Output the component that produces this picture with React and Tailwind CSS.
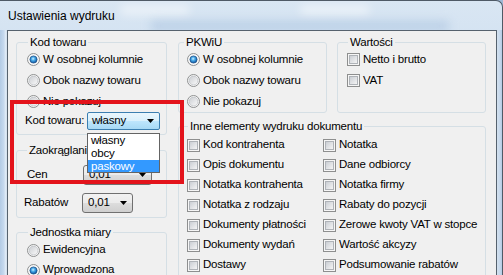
import React from "react";

function Radio({ checked }) {
  return (
    <svg width="13" height="13" viewBox="0 0 13 13" className="shrink-0">
      <defs>
        <linearGradient id="rgu" x1="0" y1="0" x2="1" y2="1">
          <stop offset="0" stopColor="#c9ccd1" />
          <stop offset="1" stopColor="#fbfbfb" />
        </linearGradient>
        <radialGradient id="rgc" cx="0.45" cy="0.4" r="0.65">
          <stop offset="0" stopColor="#d6f1ff" />
          <stop offset="0.35" stopColor="#4fb0ec" />
          <stop offset="0.8" stopColor="#1766b0" />
          <stop offset="1" stopColor="#0d3f75" />
        </radialGradient>
      </defs>
      <circle cx="6.5" cy="6.5" r="6" fill="#f7f7f7" stroke="#8e9091" strokeWidth="1" />
      {checked ? (
        <circle cx="6.5" cy="6.5" r="3.6" fill="url(#rgc)" stroke="#1b4f86" strokeWidth="0.7" />
      ) : (
        <circle cx="6.5" cy="6.5" r="4.4" fill="url(#rgu)" stroke="#b3b7bc" strokeWidth="0.6" />
      )}
    </svg>
  );
}

function Check() {
  return (
    <svg width="13" height="13" viewBox="0 0 13 13" className="shrink-0">
      <defs>
        <linearGradient id="cbg" x1="0" y1="0" x2="1" y2="1">
          <stop offset="0" stopColor="#c8ccd2" />
          <stop offset="1" stopColor="#f7f7f7" />
        </linearGradient>
      </defs>
      <rect x="0.5" y="0.5" width="12" height="12" fill="#f6f6f6" stroke="#8e8f8f" />
      <rect x="2.5" y="2.5" width="8" height="8" fill="url(#cbg)" stroke="#afb3b8" />
    </svg>
  );
}

function Arrow() {
  return (
    <svg width="7" height="4" viewBox="0 0 7 4" className="shrink-0">
      <path d="M0 0H7L3.5 4Z" fill="#000" />
    </svg>
  );
}

function Group({ title, ml, className = "", children }) {
  return (
    <fieldset className={`border border-[#d5dfe5] rounded-[3px] min-w-0 ${className}`}>
      <legend className={`px-[2px] h-[14px] leading-[14px] ${ml}`}>{title}</legend>
      {children}
    </fieldset>
  );
}

function RadioRow({ label, checked, h = "h-[21px]" }) {
  return (
    <div className={`flex items-center gap-[3px] ${h}`}>
      <Radio checked={checked} />
      <span className="whitespace-nowrap">{label}</span>
    </div>
  );
}

function CheckRow({ label, h = "h-[20px]" }) {
  return (
    <div className={`flex items-center gap-[3px] ${h}`}>
      <Check />
      <span className="whitespace-nowrap">{label}</span>
    </div>
  );
}

function GrayCombo({ value, w }) {
  return (
    <div
      className={`flex items-center justify-between h-[20px] ${w} border border-[#707070] rounded-[3px] pl-[5px] pr-[5px] bg-[linear-gradient(180deg,#f2f2f2_0%,#ebebeb_50%,#dddddd_51%,#cfcfcf_100%)]`}
    >
      <span>{value}</span>
      <Arrow />
    </div>
  );
}

const others = [
  ["Kod kontrahenta", "Notatka"],
  ["Opis dokumentu", "Dane odbiorcy"],
  ["Notatka kontrahenta", "Notatka firmy"],
  ["Notatka z rodzaju", "Rabaty do pozycji"],
  ["Dokumenty płatności", "Zerowe kwoty VAT w stopce"],
  ["Dokumenty wydań", "Wartość akcyzy"],
  ["Dostawy", "Podsumowanie rabatów"],
];

export default function App() {
  return (
    <div className="relative w-[503px] h-[275px] overflow-hidden bg-[#9fb9d6] font-['Liberation_Sans',Arial,sans-serif] text-[11.5px] tracking-[-0.2px] text-black leading-none">
      <div className="flex flex-col w-full h-full rounded-tr-[7px] border-t border-r border-[#4f5a66] bg-[linear-gradient(180deg,#d9e6f3_0%,#c9dcef_45%,#b4cbe5_100%)]">
        {/* title bar */}
        <div className="relative h-[29px] flex items-center pl-[8px] text-[12px] tracking-normal overflow-hidden">
          <div className="absolute left-[120px] top-[4px] w-[70px] h-[10px] rounded-full bg-white/50 blur-[5px]" />
          <div className="absolute left-[300px] top-[4px] w-[70px] h-[10px] rounded-full bg-white/50 blur-[5px]" />
          <div className="absolute left-[150px] top-[20px] w-[300px] h-[10px] rounded-full bg-[#9fbbdc]/50 blur-[5px]" />
          <span className="relative">Ustawienia wydruku</span>
        </div>
        {/* body */}
        <div className="flex flex-1 min-h-0">
          <div className="w-[7px] bg-[linear-gradient(90deg,#b3cbe5_0%,#c6d9ee_55%,#e4edf7_85%,#c9d9ea_100%)]" />
          <div className="w-[490px] border-l border-t border-r border-[#56626e] bg-[#f0f0f0] pl-[8px] pt-[4px] flex items-start">
            {/* left column */}
            <div className="w-[151px] flex flex-col">
              <Group title="Kod towaru" ml="ml-[11px]">
                <div className="pl-[10px]">
                  <RadioRow label="W osobnej kolumnie" checked />
                  <RadioRow label="Obok nazwy towaru" />
                  <RadioRow label="Nie pokazuj" />
                </div>
                <div className="flex items-center h-[18px] mb-[4px] pl-[8px]">
                  <span className="w-[62px] whitespace-nowrap">Kod towaru:</span>
                  <div className="relative">
                    <div className="flex items-center justify-between w-[73px] h-[18px] border border-[#3c7fb1] rounded-[2px] pl-[4px] pr-[5px] bg-[linear-gradient(180deg,#eaf6fd_0%,#d9f0fc_50%,#bee6fd_51%,#a7d9f5_100%)]">
                      <span>własny</span>
                      <Arrow />
                    </div>
                    <div className="absolute left-0 top-[21px] z-10 w-[73px] border border-[#646464] bg-white">
                      <div className="h-[13px] leading-[13px] pl-[3px]">własny</div>
                      <div className="h-[13px] leading-[13px] pl-[3px]">obcy</div>
                      <div className="h-[12px] leading-[12px] pl-[3px] bg-[#3399ff] text-white">paskowy</div>
                    </div>
                  </div>
                </div>
              </Group>

              <Group title="Zaokrąglanie" ml="ml-[10px]" className="mt-[8px]">
                <div className="pt-[8px] pb-[4px] flex flex-col gap-[8px]">
                  <div className="flex items-center h-[20px] pl-[10px]">
                    <span className="w-[56px]">Cen</span>
                    <GrayCombo value="0,01" w="w-[69px]" />
                  </div>
                  <div className="flex items-center h-[20px] pl-[7px]">
                    <span className="w-[58px]">Rabatów</span>
                    <GrayCombo value="0,01" w="w-[51px]" />
                  </div>
                </div>
              </Group>

              <Group title="Jednostka miary" ml="ml-[11px]" className="mt-[7px]">
                <div className="pt-[1px] pl-[10px] pb-[6px]">
                  <RadioRow label="Ewidencyjna" h="h-[20px]" />
                  <RadioRow label="Wprowadzona" checked h="h-[20px]" />
                </div>
              </Group>
            </div>

            {/* right area */}
            <div className="ml-[11px] w-[308px] flex flex-col">
              <div className="flex gap-[10px]">
                <Group title="PKWiU" ml="ml-[5px]" className="w-[149px]">
                  <div className="pl-[8px]">
                    <RadioRow label="W osobnej kolumnie" checked />
                    <RadioRow label="Obok nazwy towaru" />
                    <RadioRow label="Nie pokazuj" />
                  </div>
                </Group>
                <Group title="Wartości" ml="ml-[10px]" className="w-[149px]">
                  <div className="pl-[9px]">
                    <CheckRow label="Netto i brutto" h="h-[21px]" />
                    <CheckRow label="VAT" h="h-[21px]" />
                  </div>
                </Group>
              </div>
              <Group title="Inne elementy wydruku dokumentu" ml="ml-[9px]" className="mt-[6px]">
                <div className="pt-[2px] pb-[6px] pl-[8px] grid grid-cols-[136px_1fr]">
                  {others.map(([a, b]) => (
                    <React.Fragment key={a}>
                      <CheckRow label={a} />
                      <CheckRow label={b} />
                    </React.Fragment>
                  ))}
                </div>
              </Group>
            </div>
          </div>
          <div className="w-[5px] bg-[linear-gradient(90deg,#d3e1ee_0%,#c6d8ec_60%,#b3cae4_100%)]" />
        </div>
      </div>

      {/* red annotation frame */}
      <div className="absolute left-[10px] top-[100px] w-[174px] h-[84px] border-4 border-[#e3131b] z-20 pointer-events-none" />
    </div>
  );
}
